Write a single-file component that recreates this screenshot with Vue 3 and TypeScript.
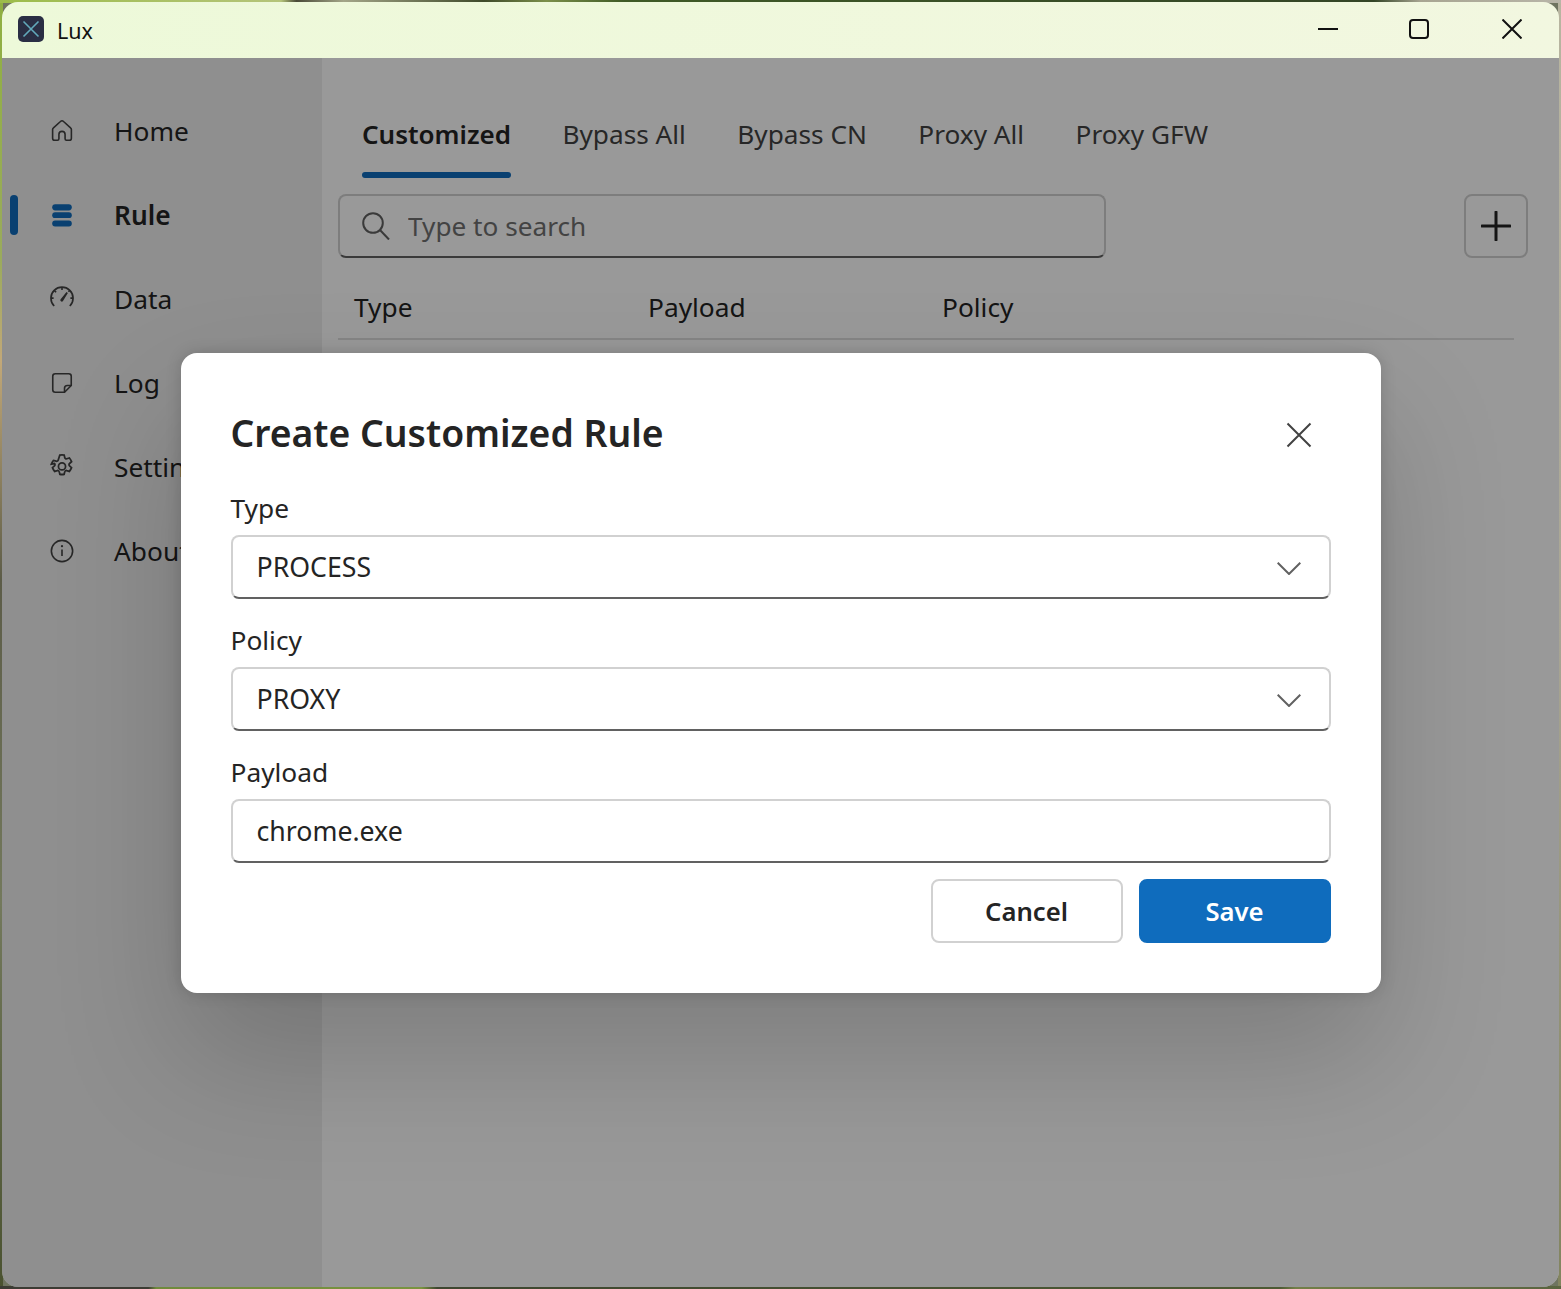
<script setup lang="ts">
import { ref } from 'vue'

type NavItem = { key: string; label: string }

const navItems: NavItem[] = [
  { key: 'home', label: 'Home' },
  { key: 'rule', label: 'Rule' },
  { key: 'data', label: 'Data' },
  { key: 'log', label: 'Log' },
  { key: 'settings', label: 'Settings' },
  { key: 'about', label: 'About' },
]
const tabs = ['Customized', 'Bypass All', 'Bypass CN', 'Proxy All', 'Proxy GFW']
const columns = ['Type', 'Payload', 'Policy']

const activeNav = ref('rule')
const activeTab = ref('Customized')
const search = ref('')
const payload = ref('chrome.exe')
</script>

<template>
  <div class="desktop">
    <div class="window">
      <header class="titlebar">
        <svg class="app-icon" viewBox="0 0 26 26">
          <rect width="26" height="26" rx="5" fill="#2a2e44" />
          <path d="M5.500 5.500l15 15M20.500 5.500l-15 15" stroke="#62a9bb" stroke-width="1.6" fill="none" />
        </svg>
        <span class="app-name">Lux</span>
        <div class="win-controls">
          <button class="win-btn"><svg width="20" height="20" viewBox="0 0 20 20"><path d="M0 10h20" /></svg></button>
          <button class="win-btn"><svg width="20" height="20" viewBox="0 0 20 20"><rect x="1" y="1" width="18" height="18" rx="3" /></svg></button>
          <button class="win-btn"><svg width="20" height="20" viewBox="0 0 20 20"><path d="M0.500 0.500l19 19M19.500 0.500l-19 19" /></svg></button>
        </div>
      </header>

      <div class="body">
        <nav class="sidebar">
          <a v-for="item in navItems" :key="item.key" class="nav-item" :class="{ active: activeNav === item.key }">
            <svg class="nav-icon" viewBox="0 0 20 20">
              <path v-if="item.key === 'home'" d="M8.900 3.200a1.600 1.600 0 0 1 2.200 0l5 4.500c.4.3.6.8.6 1.200v6.200c0 .9-.7 1.500-1.500 1.500h-2c-.6 0-1-.4-1-1v-3.100a2.200 2.200 0 0 0-4.400 0v3.100c0 .6-.4 1-1 1h-2c-.8 0-1.500-.6-1.500-1.500V8.900c0-.4.2-.9.6-1.200z" />
              <g v-else-if="item.key === 'rule'" class="bars">
                <rect x="3" y="2.300" width="14" height="4.400" rx="2.200" />
                <rect x="3" y="8" width="14" height="4.200" rx="2.100" />
                <rect x="3" y="14" width="14" height="4.200" rx="2.100" />
              </g>
              <g v-else-if="item.key === 'data'">
                <path d="M4.430 15A7.900 7.900 0 1 1 15.570 15" />
                <path d="M10 1.500v2M4.400 3.800l1.400 1.400M2.100 9.400H4M17.900 9.400H16M15.600 3.800l-1 1" />
                <path class="needle" d="M8.900 10.300l4.300-5.300 1 .7-3.600 5.900a1.100 1.100 0 0 1-1.700-1.300z" />
              </g>
              <g v-else-if="item.key === 'log'">
                <path d="M5.200 3.400h9.600c1 0 1.800.8 1.800 1.800v6.600l-4.800 4.800H5.200c-1 0-1.800-.8-1.800-1.800V5.200c0-1 .8-1.800 1.800-1.800z" />
                <path d="M11.800 16.600v-2.800c0-1.100.9-2 2-2h2.800" />
              </g>
              <g v-else-if="item.key === 'settings'" transform="translate(10 9.600) scale(1.100) translate(-10 -10)">
                <circle cx="10" cy="10" r="2.300" />
                <path d="M8.600 2.600a7.600 7.600 0 0 1 2.800 0l.4 1.700c.1.500.8.900 1.300.7l1.700-.5a7.600 7.600 0 0 1 1.400 2.400l-1.300 1.200a1 1 0 0 0 0 1.500l1.300 1.200a7.600 7.600 0 0 1-1.400 2.400l-1.700-.5c-.5-.2-1.200.2-1.300.7l-.4 1.700a7.600 7.600 0 0 1-2.800 0l-.4-1.700c-.1-.5-.8-.9-1.300-.7l-1.700.5a7.600 7.600 0 0 1-1.400-2.400l1.300-1.200a1 1 0 0 0 0-1.500L3.100 8.500a7.600 7.600 0 0 1 1.400-2.400l1.700.5c.5.2 1.200-.2 1.300-.7z" />
              </g>
              <g v-else>
                <circle cx="10" cy="10" r="7.600" />
                <path d="M10 9v4.600" />
                <circle class="dot" cx="10" cy="6.600" r=".8" />
              </g>
            </svg>
            <span>{{ item.label }}</span>
          </a>
        </nav>

        <main class="content">
          <div class="tabs">
            <div v-for="tab in tabs" :key="tab" class="tab" :class="{ active: activeTab === tab }">{{ tab }}</div>
          </div>
          <div class="toolbar">
            <label class="search">
              <svg width="28" height="28" viewBox="0 0 28 28"><circle cx="11" cy="11" r="9.800" /><path d="M18 18l9 9.500" /></svg>
              <input v-model="search" placeholder="Type to search" />
            </label>
            <button class="add-btn">
              <svg width="30" height="30" viewBox="0 0 30 30"><path d="M15 1v28M1 15h28" /></svg>
            </button>
          </div>
          <div class="table-head">
            <div v-for="col in columns" :key="col" class="col">{{ col }}</div>
          </div>
        </main>

        <div class="overlay">
          <section class="dialog">
            <div class="dialog-head">
              <h2>Create Customized Rule</h2>
              <button class="close-btn">
                <svg width="26" height="26" viewBox="0 0 26 26"><path d="M1.500 1.500l23 23M24.500 1.500l-23 23" /></svg>
              </button>
            </div>

            <div class="field">
              <label>Type</label>
              <div class="control">
                <span>PROCESS</span>
                <svg class="chevron" width="24" height="13" viewBox="0 0 24 13"><path d="M0.700 0.700L12 12l11.300-11.300" /></svg>
              </div>
            </div>
            <div class="field">
              <label>Policy</label>
              <div class="control">
                <span>PROXY</span>
                <svg class="chevron" width="24" height="13" viewBox="0 0 24 13"><path d="M0.700 0.700L12 12l11.300-11.300" /></svg>
              </div>
            </div>
            <div class="field">
              <label>Payload</label>
              <div class="control">
                <input v-model="payload" />
              </div>
            </div>

            <div class="actions">
              <button class="btn">Cancel</button>
              <button class="btn primary">Save</button>
            </div>
          </section>
        </div>
      </div>
    </div>
  </div>
</template>

<style>
html, body { margin: 0; padding: 0; }
</style>

<style scoped>
.desktop {
  width: 1561px;
  height: 1289px;
  box-sizing: border-box;
  padding: 2px;
  overflow: hidden;
  background:
    linear-gradient(90deg, #9cbc4a 0, #b5c47a 18%, #4a4a38 19%, #a3a588 22%, #3f4a2a 31%, #7c8f4a 35%, #3f5a26 40%, #344526 88%, #a8a592 91%, #b8b5a8 100%) top / 100% 3px no-repeat,
    linear-gradient(90deg, #3c3c34 0, #3c3c34 9.5%, #6f8a3c 10%, #7a9440 27%, #3e4630 28%, #4d5a34 82%, #737f48 83%, #5a6440 100%) bottom / 100% 3px no-repeat,
    linear-gradient(180deg, #8fb040 0, #9aab5c 20%, #c2a878 28%, #5c5c48 45%, #73795c 70%, #4a5230 100%) left / 3px 100% no-repeat,
    linear-gradient(180deg, #b8b5a0 0, #a8a594 50%, #82845f 100%) right / 3px 100% no-repeat,
    #6f7460;
  font-family: "Noto Sans", "Open Sans", sans-serif;
  color: #242424;
}
.window {
  height: 100%;
  display: flex;
  flex-direction: column;
  border-radius: 16px;
  overflow: hidden;
}

.titlebar {
  height: 56px;
  flex: none;
  display: flex;
  align-items: center;
  padding-left: 16px;
  background: linear-gradient(90deg, #edf9d9, #f2f7e0);
}
.app-icon { width: 26px; height: 26px; margin-top: -2px; }
.app-name { margin-left: 13px; font-size: 21.500px; color: #111; }
.win-controls { margin-left: auto; display: flex; margin-top: -2px; padding-right: 37px; }
.win-btn {
  width: 20px;
  height: 20px;
  padding: 0;
  margin-left: 71px;
  border: 0;
  background: none;
}
.win-btn:last-child { margin-left: 73px; }
.win-btn svg { display: block; fill: none; stroke: #111; stroke-width: 2; }

.body { flex: 1; display: flex; position: relative; min-height: 0; }

.sidebar {
  width: 320px;
  flex: none;
  box-sizing: border-box;
  padding-top: 33px;
  display: flex;
  flex-direction: column;
  gap: 4px;
  background: #eeeeee;
}
.nav-item {
  position: relative;
  height: 80px;
  display: flex;
  align-items: center;
  padding-left: 46px;
  font-size: 26.300px;
  white-space: nowrap;
}
.nav-item span { margin-left: 38px; }
.nav-item.active span { font-weight: 600; }
.nav-item.active::before {
  content: "";
  position: absolute;
  left: 8px;
  top: 20px;
  width: 8px;
  height: 40px;
  border-radius: 4px;
  background: #0f6cbd;
}
.nav-icon { width: 28px; height: 28px; fill: none; stroke: #424242; stroke-width: 1.150; flex: none; }
.nav-icon .bars { fill: #0f6cbd; stroke: none; }
.nav-icon .needle, .nav-icon .dot { fill: #424242; stroke: none; }

.content {
  flex: 1;
  min-width: 0;
  box-sizing: border-box;
  padding: 0 31px 0 16px;
  background: #ffffff;
}
.tabs { display: flex; gap: 51.500px; padding: 38px 0 0 24px; }
.tab {
  position: relative;
  height: 82px;
  line-height: 76px;
  font-size: 26.200px;
  color: #424242;
}
.tab.active { color: #242424; font-weight: 600; font-size: 26px; }
.tab.active::after {
  content: "";
  position: absolute;
  left: 0;
  right: 0;
  bottom: 0;
  height: 6px;
  border-radius: 3px;
  background: #0f6cbd;
}

.toolbar { display: flex; justify-content: space-between; margin-top: 16px; }
.search {
  width: 768px;
  height: 64px;
  box-sizing: border-box;
  display: flex;
  align-items: center;
  gap: 18px;
  padding-left: 22px;
  border: 2px solid #d1d1d1;
  border-bottom-color: #616161;
  border-radius: 8px;
}
.search svg { fill: none; stroke: #616161; stroke-width: 2; flex: none; }
.search input, .control input {
  flex: 1;
  min-width: 0;
  padding: 0;
  border: 0;
  outline: 0;
  background: none;
  font: inherit;
  color: inherit;
}
.search input { font-size: 26.200px; }
.search input::placeholder { color: #707070; opacity: 1; }
.add-btn {
  width: 64px;
  height: 64px;
  padding: 0;
  display: flex;
  align-items: center;
  justify-content: center;
  border: 2px solid #d1d1d1;
  border-radius: 8px;
  background: none;
}
.add-btn svg { fill: none; stroke: #242424; stroke-width: 3; stroke-linecap: round; }

.table-head {
  width: 1176px;
  height: 82px;
  box-sizing: border-box;
  padding-top: 18px;
  display: flex;
  align-items: center;
  border-bottom: 2px solid #e0e0e0;
}
.col { width: 294px; padding-left: 16px; box-sizing: border-box; font-size: 26.300px; }

.overlay {
  position: absolute;
  inset: 0;
  display: flex;
  align-items: center;
  justify-content: center;
  background: rgba(0, 0, 0, 0.4);
}
.dialog {
  width: 1200px;
  height: 640px;
  box-sizing: border-box;
  padding: 50px;
  border-radius: 16px;
  background: #fff;
  box-shadow: 0 64px 128px rgba(0, 0, 0, 0.18), 0 0 16px rgba(0, 0, 0, 0.16);
}
.dialog-head { display: flex; align-items: center; justify-content: space-between; height: 60px; }
.dialog-head h2 { margin: 0; font-size: 37.300px; font-weight: 600; line-height: 60px; }
.close-btn { padding: 0; margin: 4px 19px 0 0; border: 0; background: none; display: flex; }
.close-btn svg { fill: none; stroke: #424242; stroke-width: 2; }

.field { margin-top: 24px; }
.dialog-head + .field { margin-top: 28px; }
.field label { display: block; height: 44px; line-height: 34px; font-size: 26.300px; }
.control {
  height: 64px;
  box-sizing: border-box;
  display: flex;
  align-items: center;
  justify-content: space-between;
  padding: 0 28px 2px 24px;
  border: 2px solid #d1d1d1;
  border-bottom-color: #616161;
  border-radius: 8px;
  font-size: 26.700px;
}
.control span, .control input { position: relative; top: 1px; }
.chevron { fill: none; stroke: #616161; stroke-width: 2; margin-top: 5px; }

.actions { display: flex; justify-content: flex-end; gap: 16px; margin-top: 16px; }
.btn {
  width: 192px;
  height: 64px;
  padding: 2px 0 0 0;
  border: 2px solid #d1d1d1;
  border-radius: 8px;
  background: #fff;
  font: 600 25.700px "Noto Sans", "Open Sans", sans-serif;
  color: #242424;
}
.btn.primary { background: #0f6cbd; border-color: #0f6cbd; color: #fff; }
</style>
